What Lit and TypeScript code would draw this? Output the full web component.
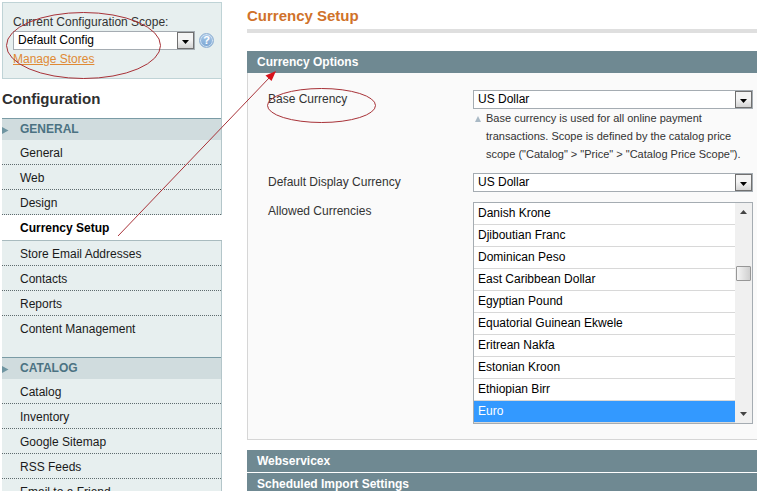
import { LitElement, html, css, svg } from "lit";
import { customElement, property } from "lit/decorators.js";
import { classMap } from "lit/directives/class-map.js";

interface Group {
  title: string;
  items: string[];
}

const GROUPS: Group[] = [
  {
    title: "GENERAL",
    items: [
      "General",
      "Web",
      "Design",
      "Currency Setup",
      "Store Email Addresses",
      "Contacts",
      "Reports",
      "Content Management",
    ],
  },
  {
    title: "CATALOG",
    items: ["Catalog", "Inventory", "Google Sitemap", "RSS Feeds", "Email to a Friend"],
  },
];

const CURRENCIES = [
  "Danish Krone",
  "Djiboutian Franc",
  "Dominican Peso",
  "East Caribbean Dollar",
  "Egyptian Pound",
  "Equatorial Guinean Ekwele",
  "Eritrean Nakfa",
  "Estonian Kroon",
  "Ethiopian Birr",
  "Euro",
];

/* Drop-down with a square grey arrow button. */
@customElement("drop-down")
class DropDown extends LitElement {
  @property() label = "";
  @property() value = "";

  static styles = css`
    :host {
      display: block;
      position: relative;
    }
    .box {
      appearance: none;
      display: block;
      box-sizing: border-box;
      width: 100%;
      height: 19px;
      margin: 0;
      padding: 0 20px 0 4px;
      border: 1px solid #a5acb2;
      border-radius: 0;
      background: #fff;
      color: #000;
      font: 12px/17px "Liberation Sans", Arial, sans-serif;
    }
    .button {
      position: absolute;
      top: 1px;
      right: 1px;
      box-sizing: border-box;
      width: 17px;
      height: 17px;
      border: 1px solid #707070;
      background: linear-gradient(#f4f4f4 45%, #d4d4d4);
      display: flex;
      align-items: center;
      justify-content: center;
      pointer-events: none;
    }
    .arrow {
      display: block;
      margin-top: 2px;
    }
  `;

  render() {
    return html`
      <select class="box" aria-label=${this.label}>
        <option>${this.value}</option>
      </select>
      <span class="button">
        <svg class="arrow" width="7" height="4" viewBox="0 0 7 4"><path d="M0 0h7L3.5 4z" fill="#000" /></svg>
      </span>
    `;
  }
}

@customElement("config-nav")
class ConfigNav extends LitElement {
  static styles = css`
    :host {
      display: block;
      box-sizing: border-box;
      border-right: 1px solid #b4c6ca;
    }
    .heading {
      margin: 0;
      padding: 11px 0;
      color: #2f2f2f;
      font-size: 15px;
      line-height: 17px;
    }
    .group {
      background: #e7efef;
      padding-bottom: 16px;
    }
    .title {
      position: relative;
      margin: 0;
      padding-left: 18px;
      border-top: 1px solid #7a9ba5;
      background: #d0dcde;
      color: #4b7282;
      font-size: 12px;
      line-height: 21px;
    }
    .marker {
      position: absolute;
      left: 0;
      top: 8px;
    }
    .list {
      margin: 0;
      padding: 0;
      list-style: none;
    }
    .link {
      display: block;
      padding: 2px 0 0 18px;
      border-bottom: 1px dotted #5e6b6e;
      color: #1a1a1a;
      text-decoration: none;
      line-height: 22px;
    }
    .item:last-child .link {
      border-bottom-color: transparent;
    }
    .link.active {
      margin-right: -1px;
      padding-bottom: 1px;
      border-bottom: 1px solid #a9bbbf;
      background: #fff;
      color: #000;
      font-weight: bold;
    }
  `;

  render() {
    return html`
      <h3 class="heading">Configuration</h3>
      ${GROUPS.map(
        (g) => html`
          <section class="group">
            <h4 class="title">
              <svg class="marker" width="7" height="7" viewBox="0 0 7 7"><path d="M0 0l6.5 3.5L0 7z" fill="#6f95a1" /></svg>
              ${g.title}
            </h4>
            <ul class="list">
              ${g.items.map(
                (i) => html`<li class="item">
                  <a href="#" class=${classMap({ link: true, active: i === "Currency Setup" })}>${i}</a>
                </li>`
              )}
            </ul>
          </section>
        `
      )}
    `;
  }
}

@customElement("app-root")
class AppRoot extends LitElement {
  static styles = css`
    :host {
      display: block;
      position: relative;
      height: 100vh;
      overflow: hidden;
      background: #fff;
      color: #333;
      font: 12px/18px "Liberation Sans", Arial, sans-serif;
    }
    .page {
      display: flex;
      gap: 25px;
      padding: 2px 0 0 2px;
    }
    .side {
      flex: 0 0 220px;
      min-width: 0;
    }
    .scope {
      box-sizing: border-box;
      height: 77px;
      padding: 10px 6px 10px 10px;
      border: 1px solid #bfd3d6;
      background: #e7efef;
    }
    .scope-title {
      display: block;
    }
    .scope-row {
      display: flex;
      align-items: center;
      gap: 4px;
    }
    .scope-row drop-down {
      flex: 0 0 182px;
    }
    .help {
      flex: none;
      box-sizing: border-box;
      width: 15px;
      height: 15px;
      padding: 0;
      border: 1px solid #8fb0d3;
      border-radius: 50%;
      background: linear-gradient(#a9c8e8, #7ba6d3);
      box-shadow: inset 0 0 0 1px #d3e3f3;
      color: #fff;
      font: bold 11px/13px "Liberation Sans", Arial, sans-serif;
      text-align: center;
    }
    .stores {
      color: #e08a35;
    }
    .main {
      flex: 1;
      min-width: 0;
    }
    .page-title {
      margin: 0 0 18px;
      padding: 5px 0;
      border-bottom: 4px solid #dfdfdf;
      color: #d0722a;
      font-size: 15px;
      line-height: 17px;
    }
    .bar {
      display: block;
      box-sizing: border-box;
      width: 100%;
      height: 22px;
      margin: 0;
      padding: 0 10px;
      border: 0;
      background: #6f8992;
      color: #fff;
      font: bold 12px/22px "Liberation Sans", Arial, sans-serif;
      text-align: left;
    }
    .panel {
      display: grid;
      grid-template-columns: 205px 280px;
      row-gap: 10px;
      margin-bottom: 10px;
      padding: 17px 0 15px 20px;
      border: 1px solid #d6d6d6;
      border-width: 0 0 1px 1px;
      background: #fafafa;
    }
    .hint {
      display: flex;
      gap: 5px;
      margin: 0;
      padding-left: 2px;
      font-size: 11px;
    }
    .hint-mark {
      flex: none;
      margin-top: 7px;
    }
    .closed {
      margin-bottom: 1px;
    }
    .picker {
      display: flex;
      box-sizing: border-box;
      height: 222px;
      border: 1px solid #a5acb2;
      background: #fff;
    }
    .currencies {
      appearance: none;
      flex: 1;
      height: 220px;
      margin: 0;
      padding: 0;
      border: 0;
      border-radius: 0;
      outline: 0;
      overflow: hidden;
      background: #fff;
      font: 12px/17px "Liberation Sans", Arial, sans-serif;
    }
    .currency {
      box-sizing: border-box;
      height: 22px;
      min-height: 22px;
      padding: 3px 4px 0;
      border-bottom: 1px solid #d8d8d8;
      color: #000;
    }
    .currency:checked {
      background: linear-gradient(#39f, #39f);
      -webkit-text-fill-color: #fff;
    }
    .scroll {
      display: flex;
      flex-direction: column;
      align-items: center;
      box-sizing: border-box;
      width: 17px;
      padding: 7px 0;
      background: #f0f0f0;
    }
    .thumb {
      box-sizing: border-box;
      width: 15px;
      height: 15px;
      margin: 52px 0 auto;
      border: 1px solid #979797;
      border-radius: 1px;
      background: linear-gradient(90deg, #f5f5f5, #cfcfcf);
    }
    .notes {
      position: absolute;
      top: 0;
      left: 0;
      pointer-events: none;
    }
  `;

  private notes() {
    return svg`
      <g fill="none" stroke="#a83238">
        <ellipse cx="83.5" cy="45.5" rx="77" ry="33" />
        <ellipse cx="321.5" cy="105.5" rx="54" ry="17" />
        <path d="M118 236L270 77" />
      </g>
      <path d="M276 71L265.500 75.500L271.500 81z" fill="#d8121c" />
    `;
  }

  render() {
    return html`
      <div class="page">
        <aside class="side">
          <div class="scope">
            <span class="scope-title">Current Configuration Scope:</span>
            <div class="scope-row">
              <drop-down label="Current Configuration Scope" value="Default Config"></drop-down>
              <button class="help" aria-label="Help">?</button>
            </div>
            <a class="stores" href="#">Manage Stores</a>
          </div>
          <config-nav></config-nav>
        </aside>
        <main class="main">
          <h2 class="page-title">Currency Setup</h2>
          <button class="bar">Currency Options</button>
          <div class="panel">
            <span>Base Currency</span>
            <div>
              <drop-down label="Base Currency" value="US Dollar"></drop-down>
              <p class="hint">
                <svg class="hint-mark" width="6" height="6" viewBox="0 0 6 6"><path d="M3 0L6 6H0z" fill="#a9b9c5" /></svg>
                <span>Base currency is used for all online payment transactions. Scope is defined by the catalog price
                  scope ("Catalog" &gt; "Price" &gt; "Catalog Price Scope").</span>
              </p>
            </div>
            <span>Default Display Currency</span>
            <drop-down label="Default Display Currency" value="US Dollar"></drop-down>
            <label for="allowed">Allowed Currencies</label>
            <div class="picker">
              <select id="allowed" class="currencies" multiple size="10">
                ${CURRENCIES.map((c) => html`<option class="currency" ?selected=${c === "Euro"}>${c}</option>`)}
              </select>
              <div class="scroll">
                <svg width="7" height="4" viewBox="0 0 7 4"><path d="M3.5 0L7 4H0z" fill="#444" /></svg>
                <span class="thumb"></span>
                <svg width="7" height="4" viewBox="0 0 7 4"><path d="M0 0h7L3.500 4z" fill="#444" /></svg>
              </div>
            </div>
          </div>
          <button class="bar closed">Webservicex</button>
          <button class="bar closed">Scheduled Import Settings</button>
        </main>
      </div>
      <svg class="notes" width="400" height="250" viewBox="0 0 400 250">${this.notes()}</svg>
    `;
  }
}
